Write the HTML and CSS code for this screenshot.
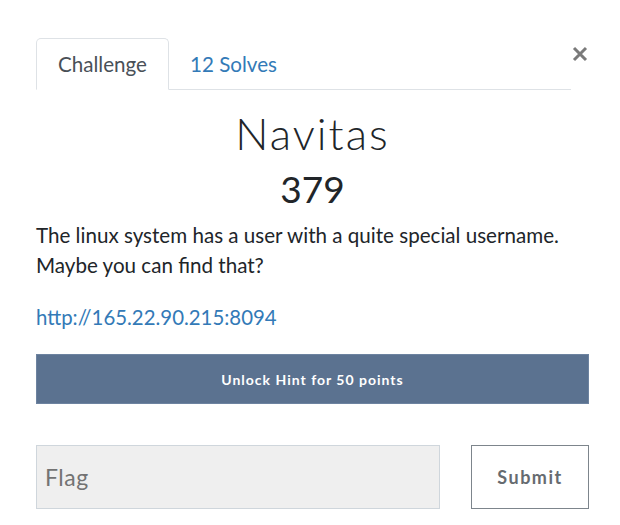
FILE: index.html
```html
<!DOCTYPE html>
<html>
<head>
<meta charset="utf-8">
<link rel="stylesheet" href="styles.css">
</head>
<body>
<div class="modal">
  <div class="top">
    <ul class="nav">
      <li class="tab active">Challenge</li>
      <li class="tab link">12 Solves</li>
    </ul>
    <button class="close" aria-label="Close">
      <svg width="16" height="16" viewBox="0 0 16 16"><path d="M2 2 L14 14 M14 2 L2 14" stroke="#7a7a7a" stroke-width="3" stroke-linecap="butt"/></svg>
    </button>
  </div>
  <h1 class="title">Navitas</h1>
  <h2 class="value">379</h2>
  <p class="desc">The linux system has a user with a quite special username. Maybe you can find that?</p>
  <p class="url"><a href="#">http://165.22.90.215:8094</a></p>
  <button class="hint">Unlock Hint for 50 points</button>
  <div class="form">
    <input class="flag" type="text" placeholder="Flag">
    <button class="submit">Submit</button>
  </div>
</div>
</body>
</html>
```
FILE: styles.css
```css
html, body {
  margin: 0;
  padding: 0;
  background: #fff;
}
body {
  font-family: Lato, "Noto Sans", sans-serif;
  color: #212529;
}
.modal {
  width: 553px;
  margin-left: 36px;
  padding-top: 38px;
}
.top {
  display: flex;
  align-items: flex-start;
}
.nav {
  flex: 1;
  display: flex;
  margin: 0;
  padding: 0;
  list-style: none;
  border-bottom: 1px solid #dee2e6;
}
.tab {
  height: 50px;
  line-height: 50px;
  padding: 0 21px;
  font-size: 20.6px;
  border: 1px solid transparent;
  border-top-left-radius: 5px;
  border-top-right-radius: 5px;
  margin-bottom: -1px;
}
.tab.active {
  color: #495057;
  border-color: #dee2e6 #dee2e6 #fff;
  background: #fff;
}
.tab.link {
  color: #337ab7;
  padding-left: 20px;
}
.close {
  width: 18px;
  height: 18px;
  margin-top: 7px;
  padding: 0;
  border: 0;
  background: none;
  display: flex;
  align-items: center;
  justify-content: center;
}
.title {
  margin: 17px 0 0;
  text-align: center;
  font-size: 44px;
  font-weight: 300;
  letter-spacing: 2px;
  line-height: 52px;
  color: #212529;
}
.value {
  margin: 8px 0 0;
  text-align: center;
  font-size: 37px;
  font-weight: 400;
  line-height: 44px;
}
.desc {
  margin: 9px 0 0;
  font-size: 20.6px;
  line-height: 30px;
}
.url {
  margin: 22px 0 0;
  font-size: 20.4px;
  line-height: 30px;
}
.url a {
  color: #337ab7;
  text-decoration: none;
}
.hint {
  display: block;
  width: 100%;
  height: 50px;
  margin-top: 22px;
  background: #5b7290;
  border: 1px solid #6d83a0;
  color: #fff;
  font-family: Lato, sans-serif;
  font-weight: 700;
  font-size: 14px;
  letter-spacing: 1px;
}
.form {
  display: flex;
  justify-content: space-between;
  margin-top: 41px;
}
.flag {
  width: 404px;
  height: 64px;
  box-sizing: border-box;
  background: #efefef;
  border: 1px solid #cfd6dc;
  padding: 0 8px;
  font-family: Lato, sans-serif;
  font-size: 23px;
  letter-spacing: 0.5px;
  color: #495057;
}
.flag::placeholder {
  color: #737373;
}
.submit {
  width: 118px;
  height: 64px;
  box-sizing: border-box;
  background: #fff;
  border: 1px solid #7d858c;
  font-family: Lato, sans-serif;
  font-weight: 700;
  font-size: 18px;
  letter-spacing: 1.5px;
  color: #666b70;
}
```
